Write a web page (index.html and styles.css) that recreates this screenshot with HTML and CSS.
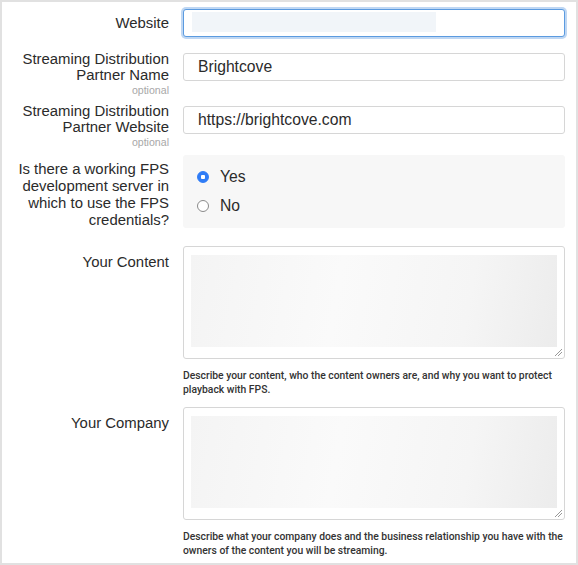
FILE: index.html
```html
<!DOCTYPE html>
<html lang="en">
<head>
<meta charset="utf-8">
<link rel="stylesheet" href="styles.css">
</head>
<body>
<div class="frame">
  <form class="form">
    <div class="row row-web">
      <label class="label">Website</label>
      <div class="control">
        <div class="input focused"><span class="redact redact-web"></span></div>
      </div>
    </div>

    <div class="row row-text">
      <label class="label">Streaming Distribution Partner Name<small class="opt">optional</small></label>
      <div class="control">
        <div class="input">Brightcove</div>
      </div>
    </div>

    <div class="row row-text row-text2">
      <label class="label">Streaming Distribution Partner Website<small class="opt">optional</small></label>
      <div class="control">
        <div class="input">https://brightcove.com</div>
      </div>
    </div>

    <div class="row row-radio">
      <label class="label">Is there a working FPS development server in which to use the FPS credentials?</label>
      <div class="control">
        <div class="radio-group">
          <div class="radio"><span class="dot checked"></span><span>Yes</span></div>
          <div class="radio"><span class="dot"></span><span>No</span></div>
        </div>
      </div>
    </div>

    <div class="row row-area">
      <label class="label">Your Content</label>
      <div class="control">
        <div class="textarea"><span class="redact redact-area"></span><span class="grip"></span></div>
        <p class="help">Describe your content, who the content owners are, and why you want to protect playback with FPS.</p>
      </div>
    </div>

    <div class="row row-area">
      <label class="label">Your Company</label>
      <div class="control">
        <div class="textarea"><span class="redact redact-area"></span><span class="grip"></span></div>
        <p class="help">Describe what your company does and the business relationship you have with the owners of the content you will be streaming.</p>
      </div>
    </div>
  </form>
</div>
</body>
</html>
```

FILE: styles.css
```css
* { box-sizing: border-box; }
html, body { margin: 0; padding: 0; background: #fff; }
body {
  font-family: "Liberation Sans", Arial, sans-serif;
  color: #333;
}
.frame {
  width: 578px;
  height: 565px;
  border: 2px solid #e1e1e1;
  overflow: hidden;
}
.form {
  display: flex;
  flex-direction: column;
  padding: 7px 11px 0 0;
}
.row {
  display: grid;
  grid-template-columns: 167px 382px;
  column-gap: 14px;
  align-items: start;
}
.label {
  text-align: right;
  font-size: 14.9px;
  line-height: 16px;
  color: #2b2b2b;
}
.row-web { margin-bottom: 14px; }
.row-web .label { line-height: 28px; }
.row-text { margin-bottom: 6px; }
.row-text .control { padding-top: 2px; }
.row-text2 .control { padding-top: 3px; }
.opt {
  display: block;
  font-size: 10.6px;
  line-height: 13px;
  color: #a8a8a8;
  margin-top: 1px;
}
.input {
  height: 28px;
  border: 1px solid #d6d6d6;
  border-radius: 3px;
  padding: 0 14px;
  font-size: 15.7px;
  line-height: 26px;
  color: #2b2b2b;
  background: #fff;
}
.input.focused {
  border: 1px solid #5b9be0;
  box-shadow: 0 0 0 2px #bfd7f3;
  padding: 2px 8px;
}
.redact {
  display: block;
  background: #f1f5f9;
}
.redact-web {
  width: 244px;
  height: 20px;
}
.row-radio { margin-bottom: 17px; }
.row-radio .label { padding-top: 6px; line-height: 17px; }
.radio-group {
  background: #f7f7f7;
  border-radius: 3px;
  height: 73px;
  padding: 12px 0 0 14px;
}
.radio {
  display: flex;
  align-items: center;
  height: 20px;
  margin-bottom: 9px;
  font-size: 15.7px;
  color: #2b2b2b;
}
.dot {
  width: 12px;
  height: 12px;
  border-radius: 50%;
  border: 1px solid #8a8a8a;
  background: #fff;
  margin-right: 11px;
}
.dot.checked {
  border: 1px solid #2f7cf6;
  background: radial-gradient(circle, #fff 0 2px, #2f7cf6 2.5px);
}
.row-area { margin-bottom: 11px; }
.row-area .label { padding-top: 8px; line-height: 17px; }
.textarea {
  position: relative;
  height: 113px;
  border: 1px solid #d6d6d6;
  border-radius: 3px;
  padding: 8px 7px;
  background: #fff;
}
.redact-area {
  height: 92px;
  background: linear-gradient(100deg, #f4f4f4 0%, #fafafa 40%, #f5f5f5 75%, #ececec 100%);
}
.grip {
  position: absolute;
  right: 2px;
  bottom: 2px;
  width: 7px;
  height: 7px;
  background: linear-gradient(135deg, transparent 0 45%, #999 45% 52%, transparent 52% 70%, #999 70% 77%, transparent 77%);
}
.help {
  margin: 10px 0 0 0;
  font-family: Roboto, "Liberation Sans", sans-serif;
  font-weight: 500;
  font-size: 10.35px;
  line-height: 13.5px;
  color: #333;
}
```
